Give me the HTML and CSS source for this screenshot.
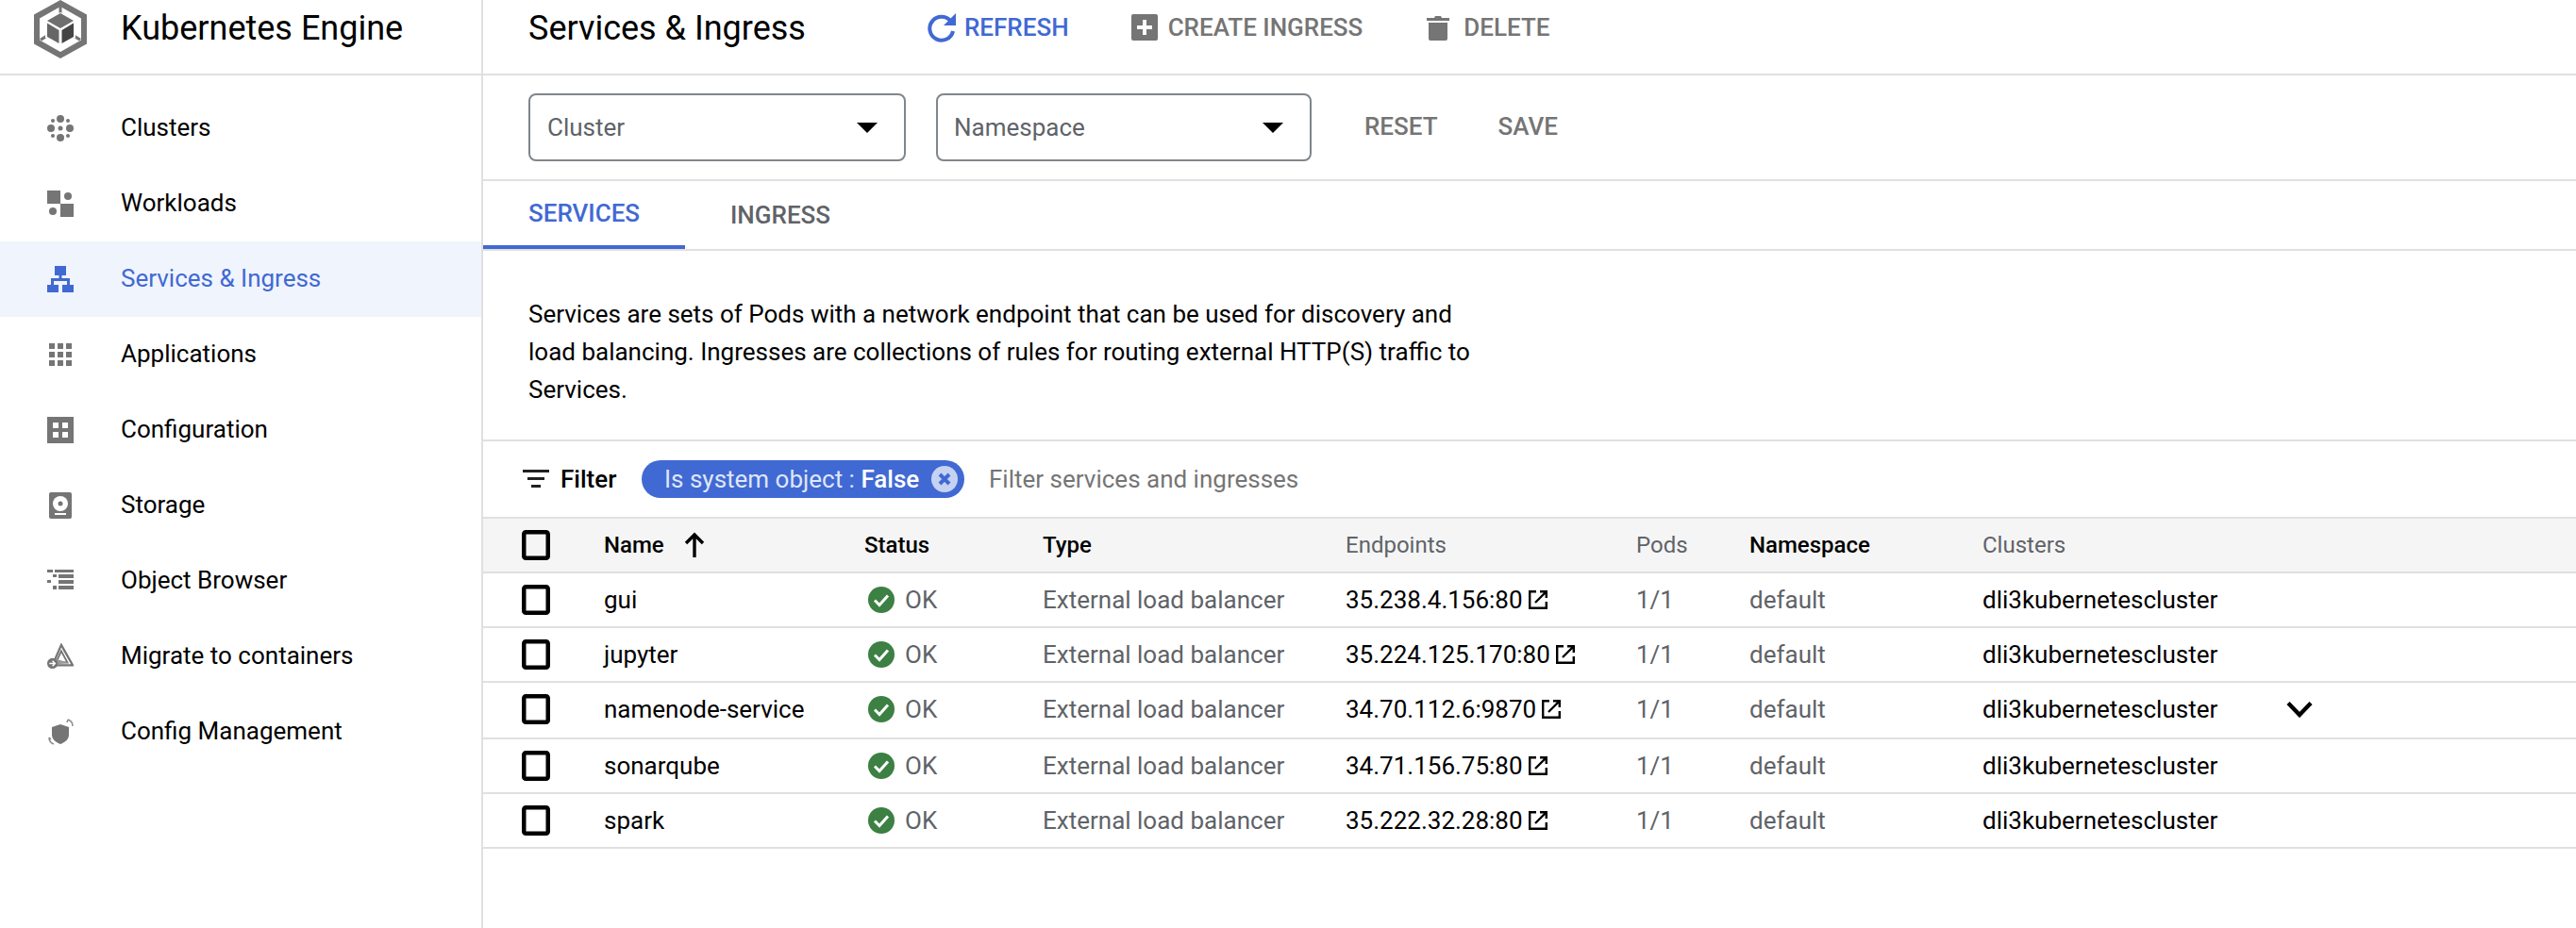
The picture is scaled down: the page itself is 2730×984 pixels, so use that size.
FILE: index.html
```html
<!DOCTYPE html>
<html lang="en">
<head>
<meta charset="utf-8">
<title>Services &amp; Ingress</title>
<link rel="stylesheet" href="styles.css">
</head>
<body>
<svg class="defs" width="0" height="0" aria-hidden="true">
  <symbol id="box" viewBox="0 0 30 32"><rect x="2.250" y="2.250" width="25.500" height="27.500" rx="2" fill="none" stroke="#000" stroke-width="4.500"/></symbol>
  <symbol id="ok" viewBox="0 0 28 28"><circle cx="14" cy="14" r="14" fill="#3c8043"/><path d="M7 14.500l5 5 9-10" fill="none" stroke="#fff" stroke-width="3"/></symbol>
  <symbol id="ext" viewBox="0 0 20 20"><path d="M8 1.200H1.200v17.600h17.600V12" fill="none" stroke="#000" stroke-width="2.400"/><path d="M12 1.200h6.800V8M18 2L7 13" fill="none" stroke="#000" stroke-width="2.400"/></symbol>
</svg>
<div class="app">
  <aside class="side">
    <header class="side-head">
      <svg class="logo" viewBox="0 0 56 62">
        <path d="M28 0L56 15.500V46.500L28 62L0 46.500V15.500Z" fill="#757575"/>
        <path d="M28 7L50 19.500V42.500L28 55L6 42.500V19.500Z" fill="#fff"/>
        <path d="M26.500 7h3v9h-3zM6 41l8-5 2 2.500-8 5zM50 41l-8-5-2 2.500 8 5z" fill="#757575"/>
        <path d="M28 13L44 22V40L28 49L12 40V22Z" fill="#fff"/>
        <path d="M28 14L42 22L28 30L14 22Z" fill="#6f6f6f"/>
        <path d="M14 24.500L26.500 32V46L14 39Z" fill="#666"/>
        <path d="M42 24.500L29.500 32V46L42 39Z" fill="#444"/>
      </svg>
      <span class="product">Kubernetes Engine</span>
    </header>
    <nav class="nav">
      <a class="nav-item">
        <svg class="nav-icon" viewBox="0 0 28 28" fill="#757575"><circle cx="14" cy="4" r="4"/><circle cx="14" cy="24" r="4"/><circle cx="4" cy="14" r="4"/><circle cx="24" cy="14" r="4"/><circle cx="14" cy="14" r="2.500"/><circle cx="6" cy="6" r="2"/><circle cx="22" cy="6" r="2"/><circle cx="6" cy="22" r="2"/><circle cx="22" cy="22" r="2"/></svg>
        <span>Clusters</span>
      </a>
      <a class="nav-item">
        <svg class="nav-icon" viewBox="0 0 28 28" fill="#757575"><rect width="14" height="14"/><rect x="14" y="14" width="14" height="14"/><circle cx="22" cy="6" r="4"/><circle cx="6" cy="22" r="4"/></svg>
        <span>Workloads</span>
      </a>
      <a class="nav-item active">
        <svg class="nav-icon" viewBox="0 0 28 28" fill="#4169d3"><rect x="8" width="12" height="10"/><rect x="12.500" y="10" width="3" height="5"/><rect x="4" y="13" width="20" height="3"/><rect y="20" width="12" height="8"/><rect x="16" y="20" width="12" height="8"/><rect x="4" y="15" width="3" height="6"/><rect x="21" y="15" width="3" height="6"/></svg>
        <span>Services &amp; Ingress</span>
      </a>
      <a class="nav-item">
        <svg class="nav-icon" viewBox="0 0 28 28" fill="#757575"><rect x="2" y="2" width="6" height="6"/><rect x="11" y="2" width="6" height="6"/><rect x="20" y="2" width="6" height="6"/><rect x="2" y="11" width="6" height="6"/><rect x="11" y="11" width="6" height="6"/><rect x="20" y="11" width="6" height="6"/><rect x="2" y="20" width="6" height="6"/><rect x="11" y="20" width="6" height="6"/><rect x="20" y="20" width="6" height="6"/></svg>
        <span>Applications</span>
      </a>
      <a class="nav-item">
        <svg class="nav-icon" viewBox="0 0 28 28"><rect width="28" height="28" fill="#757575"/><path d="M6 6h6v6H6zM16 6h6v6h-6zM6 16h6v6H6zM16 16h6v6h-6z" fill="#fff"/></svg>
        <span>Configuration</span>
      </a>
      <a class="nav-item">
        <svg class="nav-icon" viewBox="0 0 28 28"><rect x="2" width="24" height="28" rx="2" fill="#757575"/><circle cx="14" cy="12" r="8" fill="#fff"/><circle cx="14" cy="12" r="2.500" fill="#757575"/><rect x="8" y="22" width="12" height="2" fill="#fff"/></svg>
        <span>Storage</span>
      </a>
      <a class="nav-item">
        <svg class="nav-icon" viewBox="0 0 28 28" fill="#757575"><rect y="2" width="6" height="3"/><rect x="8" y="2" width="20" height="3"/><rect x="6" y="7" width="4" height="3"/><rect x="12" y="7" width="16" height="4"/><rect y="13" width="4" height="3"/><rect x="12" y="13" width="16" height="4"/><rect x="6" y="19" width="4" height="4"/><rect x="12" y="19" width="16" height="4"/></svg>
        <span>Object Browser</span>
      </a>
      <a class="nav-item">
        <svg class="nav-icon" viewBox="0 0 30 28"><path d="M16 1L29 24H6Z" fill="none" stroke="#757575" stroke-width="2.400"/><path d="M16 8L23 21H10Z" fill="none" stroke="#757575" stroke-width="2"/><path d="M10 17l14 4-14 2z" fill="#9a9a9a"/><circle cx="6" cy="22" r="6" fill="#757575"/><path d="M2.500 22h6M6 19l3 3-3 3" fill="none" stroke="#fff" stroke-width="1.500"/></svg>
        <span>Migrate to containers</span>
      </a>
      <a class="nav-item">
        <svg class="nav-icon" viewBox="0 0 28 28" fill="none"><path d="M14 6l9 3v8c0 5-4 8-9 10-5-2-9-5-9-10V9z" fill="#757575"/><path d="M22 1c3 1 5 3 5 7M22 1l-1 3M2 20c0 3 2 6 5 7M2 20l2 2" stroke="#8a8a8a" stroke-width="1.500"/></svg>
        <span>Config Management</span>
      </a>
    </nav>
  </aside>

  <main class="main">
    <header class="toolbar">
      <h1 class="title">Services &amp; Ingress</h1>
      <a class="tool tool-blue">
        <svg class="tool-icon" viewBox="0 0 32 32"><path d="M26 10A12.500 12.500 0 1 0 28 20" fill="none" stroke="#4169d3" stroke-width="4"/><path d="M31 1V14H18Z" fill="#4169d3"/></svg>
        REFRESH
      </a>
      <a class="tool tool-create">
        <svg class="tool-icon" viewBox="0 0 28 28"><rect width="28" height="28" rx="2" fill="#757575"/><path d="M12 6h4v6h6v4h-6v6h-4v-6H6v-4h6z" fill="#fff"/></svg>
        CREATE INGRESS
      </a>
      <a class="tool tool-delete">
        <svg class="tool-icon" viewBox="0 0 24 28" fill="#757575"><path d="M0 4h8l1-2h6l1 2h8v3H0zM2 9h20v17a2 2 0 0 1-2 2H4a2 2 0 0 1-2-2z"/></svg>
        DELETE
      </a>
    </header>

    <section class="filters">
      <div class="select"><span>Cluster</span><i class="caret"></i></div>
      <div class="select"><span>Namespace</span><i class="caret"></i></div>
      <a class="link-btn">RESET</a>
      <a class="link-btn">SAVE</a>
    </section>

    <nav class="tabs">
      <a class="tab tab-active">SERVICES</a>
      <a class="tab">INGRESS</a>
    </nav>

    <p class="intro">Services are sets of Pods with a network endpoint that can be used for discovery and load balancing. Ingresses are collections of rules for routing external HTTP(S) traffic to Services.</p>

    <div class="filterbar">
      <svg class="filter-icon" viewBox="0 0 28 20" fill="#212121"><rect width="28" height="3"/><rect x="5" y="8" width="18" height="3"/><rect x="9" y="16" width="10" height="3"/></svg>
      <span class="filter-label">Filter</span>
      <span class="chip">Is system object : <b>False</b>
        <svg class="chip-x" viewBox="0 0 28 28"><circle cx="14" cy="14" r="14" fill="#c6d2f1"/><path d="M9 9l10 10M19 9L9 19" stroke="#4169d3" stroke-width="4"/></svg>
      </span>
      <span class="filter-hint">Filter services and ingresses</span>
    </div>

    <div class="table">
      <div class="row head">
        <span class="c-check"><svg class="check"><use href="#box"/></svg></span>
        <span class="strong name-head">Name<svg class="sort" viewBox="0 0 24 28"><path d="M12 27V3M3 12l9-9 9 9" fill="none" stroke="#000" stroke-width="3.400"/></svg></span>
        <span class="strong">Status</span>
        <span class="strong">Type</span>
        <span class="muted">Endpoints</span>
        <span class="muted">Pods</span>
        <span class="strong">Namespace</span>
        <span class="muted">Clusters</span>
        <span></span>
      </div>
      <div class="row">
        <span class="c-check"><svg class="check"><use href="#box"/></svg></span>
        <span>gui</span>
        <span class="status"><svg class="ok"><use href="#ok"/></svg>OK</span>
        <span class="muted">External load balancer</span>
        <span class="endpoint">35.238.4.156:80<svg class="ext"><use href="#ext"/></svg></span>
        <span class="muted">1/1</span>
        <span class="muted">default</span>
        <span>dli3kubernetescluster</span>
        <span></span>
      </div>
      <div class="row">
        <span class="c-check"><svg class="check"><use href="#box"/></svg></span>
        <span>jupyter</span>
        <span class="status"><svg class="ok"><use href="#ok"/></svg>OK</span>
        <span class="muted">External load balancer</span>
        <span class="endpoint">35.224.125.170:80<svg class="ext"><use href="#ext"/></svg></span>
        <span class="muted">1/1</span>
        <span class="muted">default</span>
        <span>dli3kubernetescluster</span>
        <span></span>
      </div>
      <div class="row row-tall">
        <span class="c-check"><svg class="check"><use href="#box"/></svg></span>
        <span>namenode-service</span>
        <span class="status"><svg class="ok"><use href="#ok"/></svg>OK</span>
        <span class="muted">External load balancer</span>
        <span class="endpoint">34.70.112.6:9870<svg class="ext"><use href="#ext"/></svg></span>
        <span class="muted">1/1</span>
        <span class="muted">default</span>
        <span>dli3kubernetescluster</span>
        <span class="c-more"><svg class="chev" viewBox="0 0 28 18"><path d="M2 2.500l12 12.500L26 2.500" fill="none" stroke="#000" stroke-width="4.400"/></svg></span>
      </div>
      <div class="row">
        <span class="c-check"><svg class="check"><use href="#box"/></svg></span>
        <span>sonarqube</span>
        <span class="status"><svg class="ok"><use href="#ok"/></svg>OK</span>
        <span class="muted">External load balancer</span>
        <span class="endpoint">34.71.156.75:80<svg class="ext"><use href="#ext"/></svg></span>
        <span class="muted">1/1</span>
        <span class="muted">default</span>
        <span>dli3kubernetescluster</span>
        <span></span>
      </div>
      <div class="row">
        <span class="c-check"><svg class="check"><use href="#box"/></svg></span>
        <span>spark</span>
        <span class="status"><svg class="ok"><use href="#ok"/></svg>OK</span>
        <span class="muted">External load balancer</span>
        <span class="endpoint">35.222.32.28:80<svg class="ext"><use href="#ext"/></svg></span>
        <span class="muted">1/1</span>
        <span class="muted">default</span>
        <span>dli3kubernetescluster</span>
        <span></span>
      </div>
    </div>
  </main>
</div>
</body>
</html>
```

FILE: styles.css
```css
* { box-sizing: border-box; }
html, body { margin: 0; height: 100%; overflow: hidden; background: #fff; }
body { font-family: Roboto, "Liberation Sans", sans-serif; font-size: 26px; color: #000; }
.defs { display: block; height: 0; }
.app { display: flex; height: 984px; }

.side { width: 512px; flex: none; border-right: 2px solid #e0e0e0; }
.side-head { height: 80px; border-bottom: 2px solid #e0e0e0; display: flex; align-items: flex-start; padding-left: 36px; }
.logo { width: 56px; height: 62px; flex: none; }
.product { margin-left: 36px; font-size: 36px; line-height: 60px; }
.nav { padding-top: 16px; }
.nav-item { height: 80px; display: flex; align-items: center; padding-left: 50px; color: #000; }
.nav-item span { margin-bottom: 2px; }
.nav-icon { width: 28px; height: 28px; flex: none; margin-right: 50px; }
.nav-item.active { background: #f0f4fd; color: #4169d3; }

.main { flex: 1; min-width: 0; }
.toolbar { height: 80px; border-bottom: 2px solid #e0e0e0; display: flex; align-items: flex-start; padding-left: 48px; }
.title { margin: 0; font-weight: 400; font-size: 36px; line-height: 60px; width: 422px; flex: none; }
.tool { display: flex; align-items: center; height: 58px; font-weight: 500; font-size: 26px; color: #757575; }
.tool-blue { color: #4169d3; margin-right: 66px; }
.tool-create { margin-right: 68px; }
.tool-icon { width: 28px; height: 28px; margin-right: 11px; flex: none; }
.tool-blue .tool-icon { width: 32px; height: 32px; margin-right: 8px; }
.tool-delete .tool-icon { width: 24px; margin-right: 15px; }

.filters { height: 112px; border-bottom: 2px solid #e0e0e0; display: flex; align-items: center; padding: 0 48px; gap: 32px; }
.select { width: 400px; height: 72px; border: 2px solid #80868b; border-radius: 8px; display: flex; align-items: center; justify-content: space-between; padding: 0 28px 0 18px; color: #5f6368; }
.select + .select { width: 398px; padding-left: 17px; }
.caret { width: 0; height: 0; border-left: 11px solid transparent; border-right: 11px solid transparent; border-top: 11px solid #000; }
.link-btn { font-weight: 500; font-size: 26px; color: #757575; margin: 0 32px 3px 0; }
.select + .link-btn { margin-left: 24px; }

.tabs { height: 74px; border-bottom: 2px solid #e0e0e0; display: flex; }
.tab { height: 72px; display: flex; align-items: center; font-weight: 500; font-size: 26px; color: #5f6368; padding: 0 48px; }
.tab-active { color: #4169d3; border-bottom: 4px solid #4169d3; width: 214px; }

.intro { margin: 0; height: 202px; border-bottom: 2px solid #e0e0e0; padding: 47px 1170px 0 48px; line-height: 40px; color: #000; }
.filterbar { height: 80px; display: flex; align-items: center; padding-left: 42px; }
.filter-icon { width: 28px; height: 20px; flex: none; margin-right: 12px; }
.filter-label { font-weight: 500; width: 86px; }
.chip { height: 40px; width: 342px; border-radius: 20px; background: #4169d3; color: #dfe6f8; display: flex; align-items: center; padding-left: 24px; white-space: pre; }
.chip b { font-weight: 500; color: #fff; }
.chip-x { width: 28px; height: 28px; margin-left: 13px; flex: none; }
.filter-hint { margin-left: 26px; color: #757575; }

.table { border-top: 2px solid #e0e0e0; }
.row { display: grid; grid-template-columns: 128px 276px 189px 321px 308px 120px 247px 322px 1fr; align-items: center; height: 58px; border-bottom: 2px solid #e0e0e0; }
.row-tall { height: 60px; padding-bottom: 3px; }
.head { background: #f5f5f5; font-size: 24px; }
.strong { font-weight: 500; }
.muted { color: #5f6368; }
.c-check { display: flex; padding-left: 41px; }
.check { width: 30px; height: 32px; }
.name-head { display: flex; align-items: center; }
.sort { width: 24px; height: 28px; margin-left: 20px; }
.status { display: flex; align-items: center; color: #5f6368; }
.ok { width: 28px; height: 28px; margin: 0 11px 0 4px; }
.endpoint { display: flex; align-items: center; }
.ext { width: 20px; height: 20px; margin-left: 6px; }
.c-more { display: block; }
.chev { display: block; width: 28px; height: 18px; }
```
